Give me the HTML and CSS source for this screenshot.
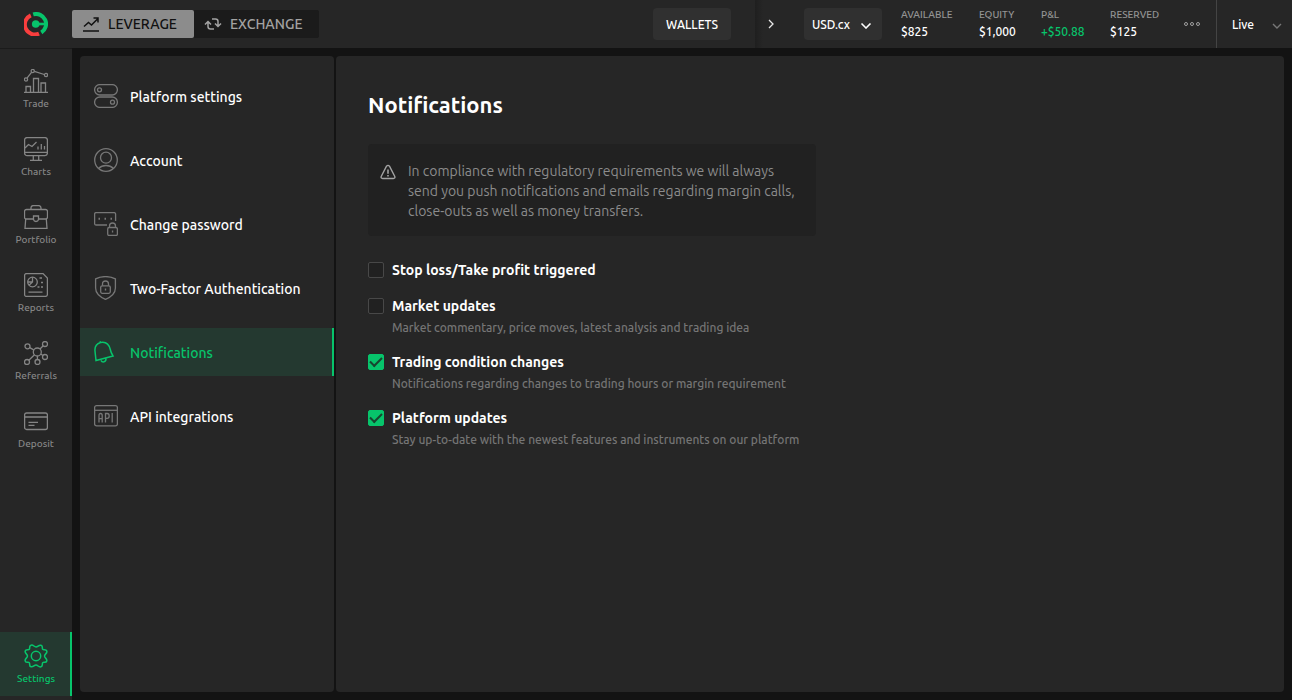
FILE: index.html
```
<!DOCTYPE html>
<html lang="en">
<head>
<meta charset="utf-8">
<title>Notifications</title>
<link rel="stylesheet" href="styles.css">
</head>
<body>
<header class="topbar">
  <a class="logo" href="#" aria-label="Home">
    <svg width="24" height="24" viewBox="0 0 24 24" fill="none" stroke-width="4">
      <path stroke="#f93e3e" d="M6.800 3.300A10 10 0 1 0 15 21.600"/>
      <path stroke="#07c46b" d="M9.200 2.400A10 10 0 0 1 17.300 20.500"/>
      <path stroke="#07c46b" stroke-width="2.600" d="M12 12h11"/>
      <circle cx="11.700" cy="12" r="3.800" fill="#07c46b"/>
    </svg>
  </a>
  <div class="modes">
    <button class="mode mode-active" type="button">
      <svg width="18" height="18" viewBox="0 0 18 18" fill="none" stroke="currentColor" stroke-width="1.5"><path d="M1 16h16M2 11.5l4.500-4 3 2.500L16 3.500M11.500 3H16v4.500"/></svg>
      LEVERAGE
    </button>
    <button class="mode" type="button">
      <svg width="18" height="18" viewBox="0 0 18 18" fill="none" stroke="currentColor" stroke-width="1.5"><path d="M1 9.500l3-3 3 3M4 7v4.500Q4 14 6.500 14H10M17 8.500l-3 3-3-3M14 11V6.500Q14 4 11.500 4H8"/></svg>
      EXCHANGE
    </button>
  </div>
  <button class="pill wallets" type="button">WALLETS</button>
  <div class="summary">
    <button class="plain" type="button" aria-label="Next"><svg width="8" height="12" viewBox="0 0 8 12" fill="none" stroke="#e8e8e8" stroke-width="1.3"><path d="M2 2l4 4-4 4"/></svg></button>
    <button class="pill currency" type="button">USD.cx
      <svg width="12" height="8" viewBox="0 0 12 8" fill="none" stroke="currentColor" stroke-width="1.6"><path d="M1.500 2.500L6 7l4.500-4.500"/></svg>
    </button>
    <dl class="stats">
      <div><dt>AVAILABLE</dt><dd>$825</dd></div>
      <div><dt>EQUITY</dt><dd>$1,000</dd></div>
      <div><dt>P&amp;L</dt><dd class="gain">+$50.88</dd></div>
      <div><dt>RESERVED</dt><dd>$125</dd></div>
    </dl>
    <button class="plain" type="button" aria-label="More"><svg width="16" height="6" viewBox="0 0 16 6" fill="none" stroke="#a0a0a0"><circle cx="2" cy="3" r="1.500"/><circle cx="8" cy="3" r="1.500"/><circle cx="14" cy="3" r="1.500"/></svg></button>
  </div>
  <button class="account-mode" type="button">Live
    <svg width="10" height="8" viewBox="0 0 10 8" fill="none" stroke="#777" stroke-width="1.400"><path d="M1 3l4 4 4-4"/></svg>
  </button>
</header>

<div class="body">
  <nav class="rail" aria-label="Main">
    <a class="rail-item" href="#">
      <svg class="icon" viewBox="0 0 24 24"><path d="M0 23.300h24M2 23v-5.500h4.500V23M9.500 23V9.500h5V23M17 23v-9h4.500v9"/><circle cx="2" cy="10.500" r="1.600"/><circle cx="8.700" cy="2" r="1.600"/><circle cx="22" cy="6" r="1.600"/><path d="M3 9.200l4.700-6M10.300 2.400l10 3.100"/></svg>
      Trade
    </a>
    <a class="rail-item" href="#">
      <svg class="icon" viewBox="0 0 24 24"><rect x=".6" y=".6" width="22.800" height="18" rx="2.500"/><path d="M.6 15.300h22.800M9.300 19v4M14.700 19v4M6 23.300h12M1 11l3.500-3.500 3.500 2L12.500 5M14 9.500v3M17.300 7v5.500M20.500 9v3.500"/></svg>
      Charts
    </a>
    <a class="rail-item" href="#">
      <svg class="icon" viewBox="0 0 24 24"><path d="M7 4.500V3q0-2.400 2.400-2.400h5.200Q17 .6 17 3v1.500"/><path d="M9.500 14H2.500q-2 0-2-2V6.500q0-2 2-2h19q2 0 2 2V12q0 2-2 2h-7"/><path d="M1.700 14L1 23.300h22L22.300 14M9.500 11h5v3.500q-.5 2-2.500 2t-2.500-2z"/></svg>
      Portfolio
    </a>
    <a class="rail-item" href="#">
      <svg class="icon" viewBox="0 0 24 24"><path d="M2.600.6H19l4.400 4.400v16.400q0 2-2 2H2.600q-2 0-2-2V2.600q0-2 2-2z"/><circle cx="8.500" cy="9" r="4.800"/><path d="M8.500 4.200V9l-3.500 3.300M8.500 9H4M15.500 5h2.500M17 9.500h2M13.500 14h2M17 14h2M4.500 19.200h14"/></svg>
      Reports
    </a>
    <a class="rail-item" href="#">
      <svg class="icon" viewBox="0 0 24 24"><circle cx="13.300" cy="11" r="4"/><circle cx="3.500" cy="5.300" r="2.500"/><circle cx="21" cy="3" r="2.500"/><circle cx="3" cy="21" r="2.500"/><circle cx="13.500" cy="21" r="2.500"/><circle cx="21" cy="16" r="2.500"/><path d="M5.700 6.600l4 2.300M16 8l3.200-3.200M4.800 19.200l5.700-5.400M13.400 15v3.500M16.800 13l2 1.500"/></svg>
      Referrals
    </a>
    <a class="rail-item" href="#">
      <svg class="icon" viewBox="0 0 24 24"><rect x=".6" y="4" width="22.800" height="16.500" rx="2"/><path d="M.6 8h22.800M4.500 13.300h9.500M4.500 16.300h6"/></svg>
      Deposit
    </a>
    <a class="rail-item rail-bottom selected" href="#" aria-current="page">
      <svg class="icon" viewBox="0 0 24 24"><circle cx="12" cy="12" r="4.700"/><path d="M12 3C14 3 14.600.6 17 1.200S17.700 4.300 18.700 5.300 22 4.600 22.800 7 20.500 10 20.500 12 23.400 14.600 22.800 17 19.700 17.700 18.700 18.700 19.400 22 17 22.800 14 21 12 21 9.400 23.400 7 22.800 6.300 19.700 5.300 18.700 2 19.400 1.200 17 3.500 14 3.500 12 .6 9.400 1.200 7 4.300 6.300 5.300 5.300 4.600 2 7 1.200 10 3 12 3z"/></svg>
      Settings
    </a>
  </nav>

  <nav class="menu" aria-label="Settings">
    <a class="menu-item" href="#">
      <svg class="icon" viewBox="0 0 24 24"><rect x=".6" y=".6" width="22.800" height="10.400" rx="5.200"/><rect x=".6" y="13" width="22.800" height="10.400" rx="5.200"/><circle cx="5.500" cy="5.800" r="2"/><circle cx="18.500" cy="18.200" r="2"/></svg>
      <span>Platform settings</span>
    </a>
    <a class="menu-item" href="#">
      <svg class="icon" viewBox="0 0 24 24"><circle cx="12" cy="12" r="11.300"/><circle cx="12" cy="9.700" r="5.500"/><path d="M4.500 20.500q3-3 7.500-3t7.500 3"/></svg>
      <span>Account</span>
    </a>
    <a class="menu-item" href="#">
      <svg class="icon" viewBox="0 0 24 24"><path d="M13 13H2.100Q.6 13 .6 11.500V2.100Q.6.600 2.100.600h18q1.500 0 1.500 1.500V9"/><rect x="13.700" y="15.500" width="9.700" height="8" rx="1.500"/><path d="M15.500 15.500V14q0-3 3-3t3 3v1.500"/><path stroke-width="2" d="M4.500 6.700h1.500M10.500 6.700H12M16.500 6.700H18M17.900 19.500h1.300"/></svg>
      <span>Change password</span>
    </a>
    <a class="menu-item" href="#">
      <svg class="icon" viewBox="0 0 24 24"><path d="M1.600 2.800Q6 .6 11.500.6t9.900 2.200V12q0 7-9.900 11.400Q1.600 19 1.600 12z"/><rect x="6.700" y="9.800" width="9.600" height="7.500" rx="1.500"/><path d="M8.500 9.800V8q0-3 3-3t3 3v1.800"/><path stroke-width="2" d="M10.800 13.500h1.400"/></svg>
      <span>Two-Factor Authentication</span>
    </a>
    <a class="menu-item selected" href="#" aria-current="page">
      <svg class="icon" viewBox="0 0 24 24"><path d="M6 1.200l.5 1.300C2 4 .6 7 1 11l1 9.500 17-4.500q-2-3-2.700-6.500C15 4 11.500 1.500 6.500 2.500M7 20.300q1 2 3 1.500t2-3"/></svg>
      <span>Notifications</span>
    </a>
    <a class="menu-item" href="#">
      <svg class="icon" viewBox="0 0 24 24"><rect x=".6" y="1.600" width="22.800" height="20.300" rx="2"/><path d="M.6 6.300h22.800"/><path d="M5 18.500v-7q0-2 1.600-2t1.600 2v7M5 14.700h3.200M11.500 18.500v-9h1.700q2 0 2 2.400t-2 2.400h-1.700M18.200 9v9.500"/></svg>
      <span>API integrations</span>
    </a>
  </nav>

  <main class="content">
    <h1 class="title">Notifications</h1>
    <div class="notice">
      <svg class="notice-icon" width="16" height="16" viewBox="0 0 16 16" fill="none" stroke="currentColor" stroke-width="1.400"><path d="M6.500 2.200q1.500-1.700 3 0l5.300 10.300q.6 1.900-1.400 2H2.600q-2-.1-1.400-2z"/><path stroke-width="1.600" d="M8 5.500v4.300M8 11v1.600"/></svg>
      <p>In compliance with regulatory requirements we will always send you push notifications and emails regarding margin calls, close-outs as well as money transfers.</p>
    </div>
    <form class="options">
      <div class="option">
        <input class="tick" type="checkbox" id="stop"><label for="stop">Stop loss/Take profit triggered</label>
      </div>
      <div class="option">
        <input class="tick" type="checkbox" id="market" aria-describedby="market-info"><label for="market">Market updates</label>
        <p id="market-info">Market commentary, price moves, latest analysis and trading idea</p>
      </div>
      <div class="option">
        <input class="tick" type="checkbox" id="trading" aria-describedby="trading-info" checked><label for="trading">Trading condition changes</label>
        <p id="trading-info">Notifications regarding changes to trading hours or margin requirement</p>
      </div>
      <div class="option">
        <input class="tick" type="checkbox" id="platform" aria-describedby="platform-info" checked><label for="platform">Platform updates</label>
        <p id="platform-info">Stay up-to-date with the newest features and instruments on our platform</p>
      </div>
    </form>
  </main>
</div>
</body>
</html>
```
FILE: styles.css
```
* { box-sizing: border-box; }
body {
  margin: 0;
  height: 100vh;
  display: flex;
  flex-direction: column;
  background: #131313;
  color: #fff;
  font-family: Ubuntu, "Noto Sans", sans-serif;
  font-size: 14px;
  font-weight: 500;
  line-height: 20px;
}
button { font: inherit; color: inherit; border: 0; background: none; padding: 0; cursor: pointer; }
a { color: inherit; text-decoration: none; }
p, dl, dd, h1 { margin: 0; }
svg { display: block; flex: none; }

.topbar { display: flex; align-items: center; height: 48px; background: #262626; flex: none; }
.logo { width: 72px; display: flex; justify-content: center; }
.modes { display: flex; background: #1b1b1b; border-radius: 2px; color: #a3a3a3; }
.mode { display: flex; align-items: center; gap: 8px; height: 28px; padding: 0 17px 0 10px; border-radius: 2px; }
.mode-active { background: #8c8c8c; color: #111; }
.pill { height: 32px; border-radius: 4px; background: #303030; font-size: 12px; line-height: 16px; }
.wallets { margin-left: auto; margin-right: 24px; width: 78px; padding-top: 2px; }
.summary {
  display: flex;
  align-items: center;
  align-self: stretch;
  padding: 0 16px 0 12px;
  background: linear-gradient(90deg, #1f1f1f, #262626 8px);
}
.plain { display: flex; }
.currency { display: flex; align-items: center; justify-content: space-between; width: 78px; padding: 2px 10px 0 8px; margin: 0 19px 0 29px; }
.stats { display: grid; grid-template-columns: 54px 38px 45px 50px; gap: 24px; margin-right: 24px; font-size: 12px; line-height: 16px; white-space: nowrap; }
.stats dt { color: #949494; font-size: 10px; }
.stats dd { line-height: 18px; }
.gain { color: #07c46b; }
.account-mode { display: flex; align-items: center; justify-content: space-between; align-self: stretch; width: 76px; padding: 2px 10px 0 15px; border-left: 1px solid #444; font-size: 12px; }

.body { display: flex; flex: 1; min-height: 0; gap: 2px; padding-right: 8px; }
.rail { display: flex; flex-direction: column; gap: 4px; width: 72px; margin-right: 6px; padding: 8px 0 4px; background: #262626; border-top: 1px solid #1b1b1b; color: #858585; font-size: 10px; line-height: 16px; flex: none; }
.rail-item { display: flex; flex-direction: column; align-items: center; gap: 3px; height: 64px; padding-top: 12px; }
.rail-bottom { margin-top: auto; }
.icon { width: 24px; height: 24px; fill: none; stroke: currentColor; stroke-width: 1.3; }
.selected { background: #243930; color: #07c46b; box-shadow: inset -2px 0 #07c46b; }
.selected .icon { stroke-width: 1.5; }

.menu { display: flex; flex-direction: column; gap: 16px; width: 254px; flex: none; margin: 8px 0; padding: 16px 0; border-radius: 4px; background: #262626; }
.menu-item { display: flex; align-items: center; gap: 12px; height: 48px; padding-left: 14px; }
.menu-item span { padding-top: 2px; }
.menu-item:not(.selected) .icon { color: #777; }

.content { flex: 1; margin: 8px 0; padding: 32px; border-radius: 4px; background: #262626; }
.title { margin-bottom: 22px; font-size: 22px; font-weight: 700; line-height: 34px; }
.notice { display: flex; gap: 12px; max-width: 448px; padding: 17px 12px 15px; margin-bottom: 24px; border-radius: 4px; background: #212121; color: #8c8c8c; font-weight: 400; }
.notice-icon { margin-top: 3px; color: #a3a3a3; }
.options { display: grid; gap: 16px; }
.option { display: grid; grid-template-columns: 16px 1fr; column-gap: 8px; row-gap: 4px; align-items: center; font-weight: 700; }
.option label { justify-self: start; }
.option p { grid-column: 2; color: #757575; font-size: 12px; font-weight: 500; line-height: 16px; }
.tick { appearance: none; display: grid; place-items: center; width: 16px; height: 16px; margin: 0; border: 1px solid #484848; border-radius: 2px; background: #212121; }
.tick:checked { border-color: #07c46b; background: #07c46b; }
.tick:checked::before { content: ""; width: 10px; height: 5px; margin-bottom: 3px; border: solid #17452f; border-width: 0 0 2px 2px; transform: rotate(-45deg); }
```
